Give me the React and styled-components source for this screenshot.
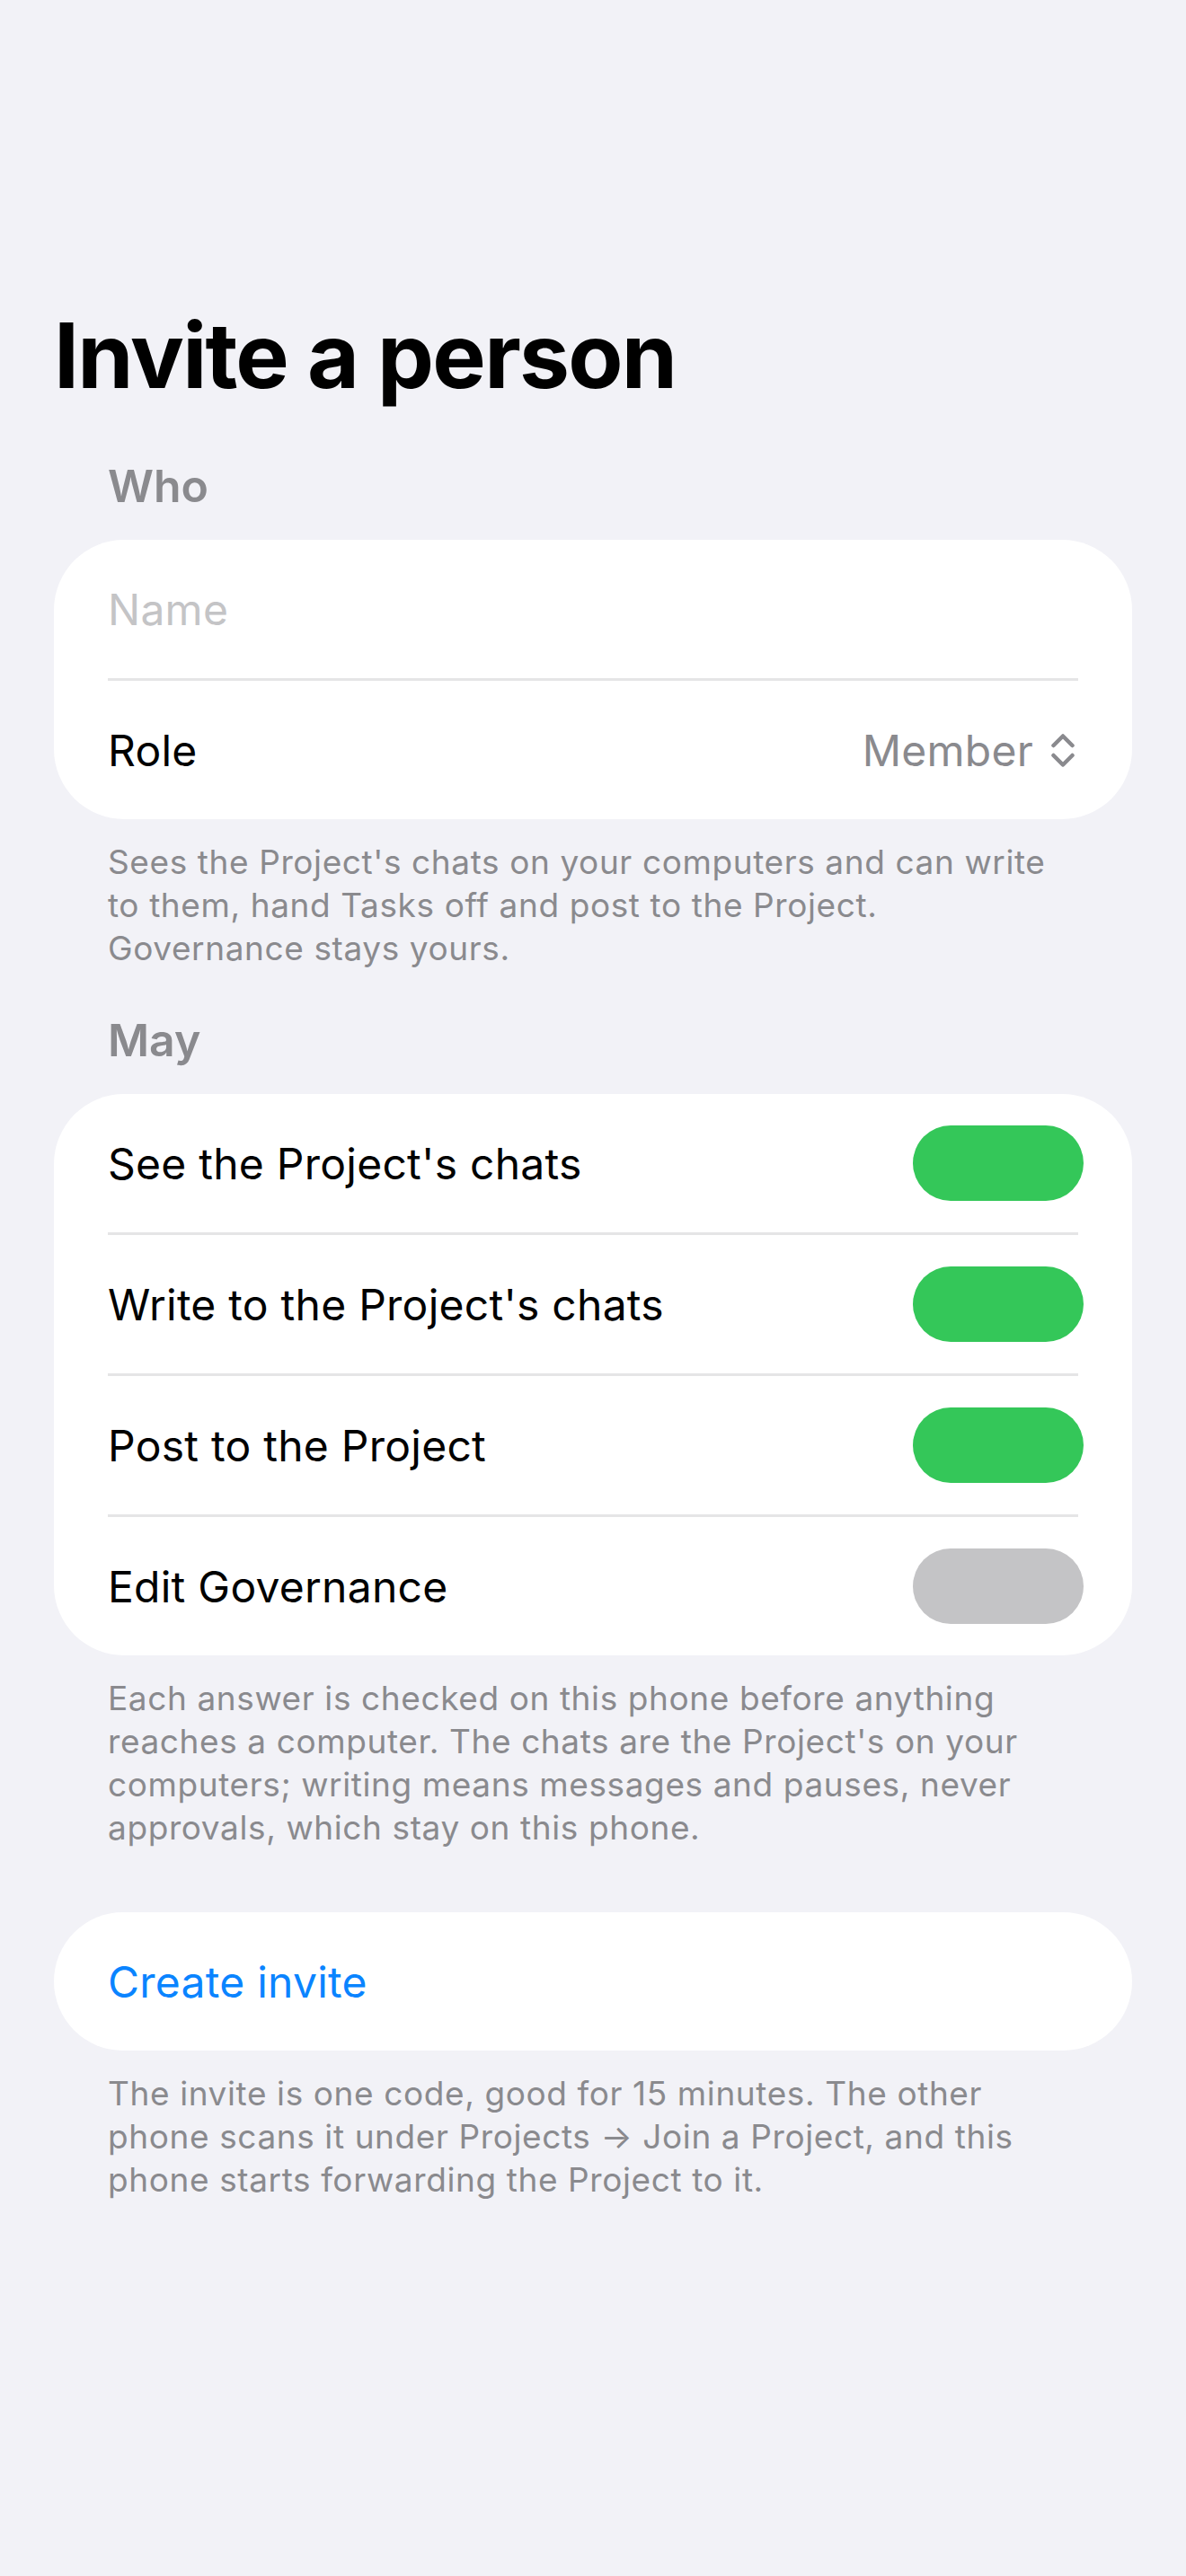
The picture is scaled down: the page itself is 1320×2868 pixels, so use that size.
import React, { useState } from "react";
import styled, { createGlobalStyle } from "styled-components";

const GlobalStyle = createGlobalStyle`
  html, body {
    margin: 0;
    padding: 0;
    background: #f2f2f7;
  }
  body {
    font-family: Inter, "Noto Sans", "Liberation Sans", sans-serif;
    -webkit-font-smoothing: antialiased;
  }
`;

const Page = styled.main`
  min-height: 2868px;
  box-sizing: border-box;
  padding: 336px 60px 0;
  background: #f2f2f7;
`;

const Title = styled.h1`
  margin: 0;
  font-size: 100px;
  line-height: 120px;
  font-weight: 700;
  letter-spacing: -1.8px;
  color: #000;
`;

const SectionHeader = styled.h2`
  margin: ${props => props.$first ? "55px" : "48px"} 0 30px;
  padding-left: 60px;
  font-size: 50px;
  line-height: 60px;
  font-weight: 600;
  color: #8a8a8e;
`;

const Card = styled.section`
  background: #fff;
  border-radius: 78px;
  overflow: hidden;
  margin-top: ${props => props.$gap || 0}px;
`;

const Row = styled.div`
  display: flex;
  align-items: center;
  justify-content: space-between;
  height: 154px;
  padding: 0 60px;
  box-sizing: border-box;
  font-size: 48px;
  letter-spacing: 0.25px;
  color: #000;
`;

const Divider = styled.div`
  height: 3px;
  margin: 0 60px;
  background: #e5e5e6;
`;

const NameInput = styled.input`
  width: 100%;
  border: 0;
  outline: none;
  padding: 0;
  background: transparent;
  font: inherit;
  letter-spacing: inherit;
  color: #000;
  &::placeholder {
    color: #c4c4c6;
  }
`;

const Picker = styled.div`
  display: flex;
  align-items: center;
  gap: 20px;
  margin-right: 4px;
  color: #8a8a8e;
`;

const Switch = styled.button`
  width: 190px;
  height: 84px;
  margin-right: -6px;
  border: 0;
  padding: 0;
  border-radius: 42px;
  background: ${props => props.$on ? "#34c759" : "#c4c4c6"};
  cursor: pointer;
`;

const Footnote = styled.p`
  margin: 24px 0 0;
  padding: 0 80px 0 60px;
  font-size: 37px;
  line-height: 48px;
  letter-spacing: 0.6px;
  color: #8a8a8e;
`;

const ActionRow = styled(Row)`
  color: #0a84ff;
  cursor: pointer;
`;

const Chevrons = () => (
  <svg width="26" height="37" viewBox="0 0 26 37" fill="none" stroke="#8a8a8e" strokeWidth="4.5" strokeLinecap="round" strokeLinejoin="round">
    <path d="M2.5 13 L13 2.5 L23.5 13" />
    <path d="M2.5 24 L13 34.5 L23.5 24" />
  </svg>
);

const permissions = [
  { label: "See the Project's chats", on: true },
  { label: "Write to the Project's chats", on: true },
  { label: "Post to the Project", on: true },
  { label: "Edit Governance", on: false },
];

export default function App() {
  const [perms, setPerms] = useState(permissions);

  const flip = i =>
    setPerms(p => p.map((x, j) => (j === i ? { ...x, on: !x.on } : x)));

  return (
    <Page>
      <GlobalStyle />
      <Title>Invite a person</Title>

      {/* Who */}
      <SectionHeader $first>Who</SectionHeader>
      <Card>
        <Row>
          <NameInput placeholder="Name" />
        </Row>
        <Divider />
        <Row>
          <span>Role</span>
          <Picker>
            <span>Member</span>
            <Chevrons />
          </Picker>
        </Row>
      </Card>
      <Footnote>
        Sees the Project's chats on your computers and can write to them, hand
        Tasks off and post to the Project. Governance stays yours.
      </Footnote>

      {/* May */}
      <SectionHeader>May</SectionHeader>
      <Card>
        {perms.map((p, i) => (
          <React.Fragment key={p.label}>
            {i > 0 && <Divider />}
            <Row>
              <span>{p.label}</span>
              <Switch $on={p.on} onClick={() => flip(i)} aria-label={p.label} />
            </Row>
          </React.Fragment>
        ))}
      </Card>
      <Footnote>
        Each answer is checked on this phone before anything reaches a
        computer. The chats are the Project's on your computers; writing means
        messages and pauses, never approvals, which stay on this phone.
      </Footnote>

      {/* Invite */}
      <Card $gap={70}>
        <ActionRow>Create invite</ActionRow>
      </Card>
      <Footnote>
        The invite is one code, good for 15 minutes. The other phone scans it
        under Projects → Join a Project, and this phone starts forwarding the
        Project to it.
      </Footnote>
    </Page>
  );
}
